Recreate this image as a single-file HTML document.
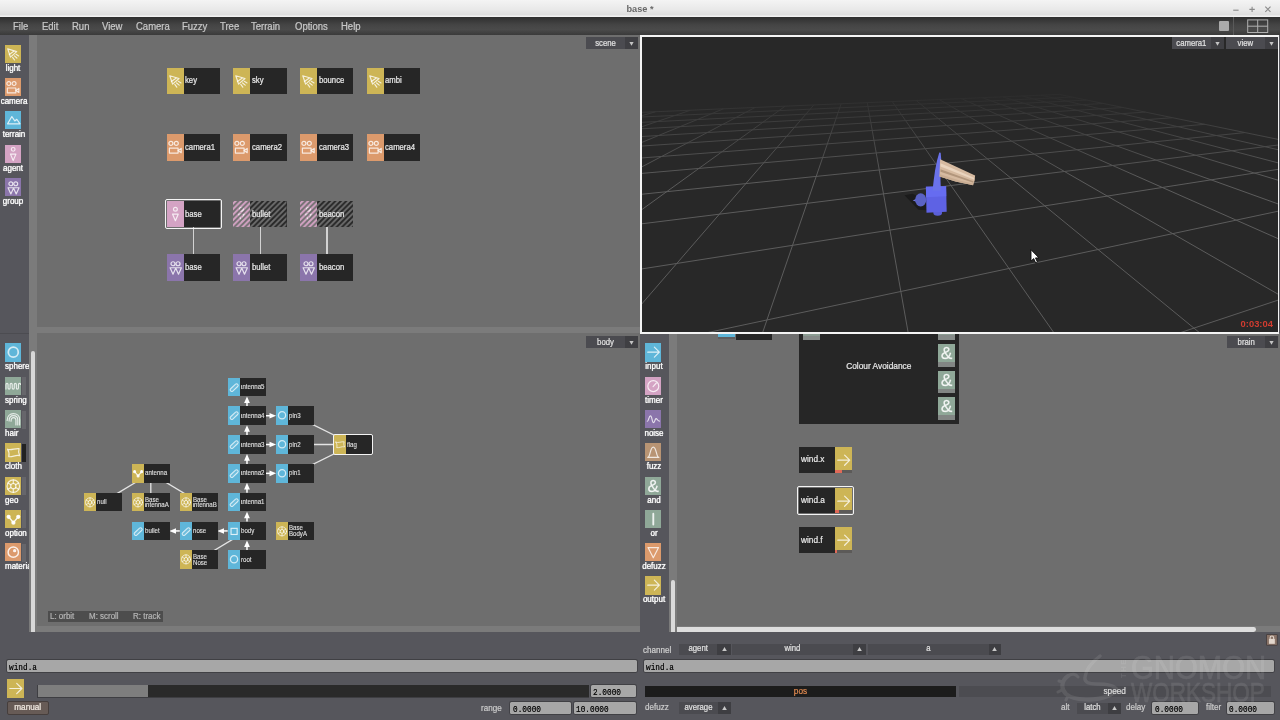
<!DOCTYPE html><html><head><meta charset="utf-8"><title>base *</title>
<style>
html,body{margin:0;padding:0;}
body{width:1280px;height:720px;overflow:hidden;position:relative;background:#56565c;font-family:'Liberation Sans', sans-serif;}
div,svg{box-sizing:border-box}
#root{position:absolute;left:0;top:0;width:1280px;height:720px;overflow:hidden;will-change:transform;-webkit-font-smoothing:antialiased}
</style></head><body><div id="root">
<div style="position:absolute;left:0px;top:0px;width:1280px;height:17px;background:linear-gradient(#f4f4f4,#e8e8e8 60%,#dedede 88%,#f2f2f2 94%);"></div>
<div style="position:absolute;left:540.00px;top:4.61px;width:200px;text-align:center;font-size:9.2px;line-height:9.2px;color:#686868;white-space:nowrap;transform:scaleX(1.0);transform-origin:50% 0;font-weight:bold">base *</div>
<svg style="position:absolute;left:1228px;top:3px" width="48" height="13" viewBox="0 0 48 13"><g stroke="#8a8a8a" stroke-width="1.1" fill="none"><path d="M5.2 7.2 H10.6"/><path d="M21.4 6.4 H26.8 M24.1 3.7 V9.1"/><path d="M37.3 3.7 L42.5 8.9 M42.5 3.7 L37.3 8.9"/></g></svg>
<div style="position:absolute;left:0px;top:17px;width:1280px;height:18px;background:linear-gradient(#2f2f2f,#454545 45%,#4a4a4a 70%,#3a3a3a);"></div>
<div style="position:absolute;left:13.20px;top:21.54px;font-size:10px;line-height:10px;color:#c8c8c8;white-space:nowrap;transform:scaleX(0.95);transform-origin:0 0;-webkit-text-stroke:0.22px #c8c8c8;">File</div>
<div style="position:absolute;left:42.00px;top:21.54px;font-size:10px;line-height:10px;color:#c8c8c8;white-space:nowrap;transform:scaleX(0.95);transform-origin:0 0;-webkit-text-stroke:0.22px #c8c8c8;">Edit</div>
<div style="position:absolute;left:72.00px;top:21.54px;font-size:10px;line-height:10px;color:#c8c8c8;white-space:nowrap;transform:scaleX(0.95);transform-origin:0 0;-webkit-text-stroke:0.22px #c8c8c8;">Run</div>
<div style="position:absolute;left:102.00px;top:21.54px;font-size:10px;line-height:10px;color:#c8c8c8;white-space:nowrap;transform:scaleX(0.95);transform-origin:0 0;-webkit-text-stroke:0.22px #c8c8c8;">View</div>
<div style="position:absolute;left:136.00px;top:21.54px;font-size:10px;line-height:10px;color:#c8c8c8;white-space:nowrap;transform:scaleX(0.95);transform-origin:0 0;-webkit-text-stroke:0.22px #c8c8c8;">Camera</div>
<div style="position:absolute;left:182.00px;top:21.54px;font-size:10px;line-height:10px;color:#c8c8c8;white-space:nowrap;transform:scaleX(0.95);transform-origin:0 0;-webkit-text-stroke:0.22px #c8c8c8;">Fuzzy</div>
<div style="position:absolute;left:220.00px;top:21.54px;font-size:10px;line-height:10px;color:#c8c8c8;white-space:nowrap;transform:scaleX(0.95);transform-origin:0 0;-webkit-text-stroke:0.22px #c8c8c8;">Tree</div>
<div style="position:absolute;left:251.00px;top:21.54px;font-size:10px;line-height:10px;color:#c8c8c8;white-space:nowrap;transform:scaleX(0.95);transform-origin:0 0;-webkit-text-stroke:0.22px #c8c8c8;">Terrain</div>
<div style="position:absolute;left:294.50px;top:21.54px;font-size:10px;line-height:10px;color:#c8c8c8;white-space:nowrap;transform:scaleX(0.95);transform-origin:0 0;-webkit-text-stroke:0.22px #c8c8c8;">Options</div>
<div style="position:absolute;left:341.00px;top:21.54px;font-size:10px;line-height:10px;color:#c8c8c8;white-space:nowrap;transform:scaleX(0.95);transform-origin:0 0;-webkit-text-stroke:0.22px #c8c8c8;">Help</div>
<div style="position:absolute;left:1219px;top:21px;width:10px;height:10px;background:#aaaaaa;border-radius:1px"></div>
<div style="position:absolute;left:1233px;top:17px;width:1px;height:18px;background:#5a5a5a;"></div>
<svg style="position:absolute;left:1247px;top:19px" width="22" height="15" viewBox="0 0 22 15"><g stroke="#b0b0b0" stroke-width="1" fill="none"><rect x="0.7" y="0.9" width="20" height="12.6"/><path d="M10.7 0.9 V13.5 M0.7 7.2 H20.7"/></g></svg>
<div style="position:absolute;left:0px;top:35px;width:29.4px;height:298px;background:#56565c;"></div>
<div style="position:absolute;left:29.4px;top:35px;width:7.4px;height:298px;background:#7b7b7b;"></div>
<div style="position:absolute;left:36.8px;top:35px;width:603.2px;height:298px;background:#6e6e6e;"></div>
<div style="position:absolute;left:36.8px;top:327.3px;width:603.2px;height:5.7px;background:#7b7b7b;"></div>
<div style="position:absolute;left:0px;top:332.8px;width:29.4px;height:0.9px;background:#4c4c51;"></div>
<svg style="position:absolute;left:4.7px;top:44.6px;background:#cdb556;" width="16.6" height="18.3" viewBox="0 0 16.6 18.3"><g transform="translate(0.00 0.36) scale(0.976)"><g stroke="#fff" stroke-opacity=".78" fill="none" stroke-width="1.2" stroke-linecap="round" stroke-linejoin="round" stroke-width="1.15"><path d="M2.8 3.6 L12 6.4 L5.6 12 Z"/><path d="M4.4 9.4 L9 6"/><path d="M11.3 9.2 L14 10.8 M9.6 10.8 L12.2 13 M7.8 12.3 L9.8 15"/></g></g></svg><div style="position:absolute;left:-17.10px;top:63.62px;width:60px;text-align:center;font-size:8.6px;line-height:8.6px;color:#fff;white-space:nowrap;transform:scaleX(0.93);transform-origin:50% 0;-webkit-text-stroke:0.22px #fff;text-shadow:0 0 1px rgba(255,255,255,.55)">light</div>
<svg style="position:absolute;left:4.7px;top:77.9px;background:#dc9a6c;" width="16.6" height="18.3" viewBox="0 0 16.6 18.3"><g transform="translate(0.00 0.36) scale(0.976)"><g stroke="#fff" stroke-opacity=".78" fill="none" stroke-width="1.2" stroke-linecap="round" stroke-linejoin="round" stroke-width="1.25"><circle cx="3.9" cy="5.3" r="2"/><circle cx="9.3" cy="5.3" r="2"/><rect x="2.4" y="9.9" width="8.7" height="5"/><path d="M11.1 12.4 L14.2 10.3 V14.5 Z"/></g></g></svg><div style="position:absolute;left:-15.60px;top:96.92px;width:60px;text-align:center;font-size:8.6px;line-height:8.6px;color:#fff;white-space:nowrap;transform:scaleX(0.93);transform-origin:50% 0;-webkit-text-stroke:0.22px #fff;text-shadow:0 0 1px rgba(255,255,255,.55)">camera</div>
<svg style="position:absolute;left:4.7px;top:111.19999999999999px;background:#5fb6d9;" width="16.6" height="18.3" viewBox="0 0 16.6 18.3"><g transform="translate(0.00 0.36) scale(0.976)"><g stroke="#fff" stroke-opacity=".78" fill="none" stroke-width="1.2" stroke-linecap="round" stroke-linejoin="round" stroke-width="1.35"><path d="M2.6 12.8 L7 5.3 L10 9.8 L12.1 8.1 L15.4 12.8 Z"/></g></g></svg><div style="position:absolute;left:-15.80px;top:130.22px;width:60px;text-align:center;font-size:8.6px;line-height:8.6px;color:#fff;white-space:nowrap;transform:scaleX(0.93);transform-origin:50% 0;-webkit-text-stroke:0.22px #fff;text-shadow:0 0 1px rgba(255,255,255,.55)">terrain</div>
<svg style="position:absolute;left:4.7px;top:144.5px;background:#d4a3c4;" width="16.6" height="18.3" viewBox="0 0 16.6 18.3"><g transform="translate(0.00 0.36) scale(0.976)"><g stroke="#fff" stroke-opacity=".78" fill="none" stroke-width="1.2" stroke-linecap="round" stroke-linejoin="round" stroke-width="1.2"><circle cx="8.4" cy="4.1" r="1.9"/><path d="M5.6 9 H11.2 L8.4 15.6 Z"/></g></g></svg><div style="position:absolute;left:-17.10px;top:163.52px;width:60px;text-align:center;font-size:8.6px;line-height:8.6px;color:#fff;white-space:nowrap;transform:scaleX(0.93);transform-origin:50% 0;-webkit-text-stroke:0.22px #fff;text-shadow:0 0 1px rgba(255,255,255,.55)">agent</div>
<svg style="position:absolute;left:4.7px;top:177.79999999999998px;background:#8b75ab;" width="16.6" height="18.3" viewBox="0 0 16.6 18.3"><g transform="translate(0.00 0.36) scale(0.976)"><g stroke="#fff" stroke-opacity=".78" fill="none" stroke-width="1.2" stroke-linecap="round" stroke-linejoin="round" stroke-width="1.2"><circle cx="6" cy="5.6" r="2"/><circle cx="11" cy="5.6" r="2"/><path d="M3.1 9.6 H8.9 L6 16 Z M8.6 9.6 H14.4 L11.5 16 Z"/></g></g></svg><div style="position:absolute;left:-16.90px;top:196.82px;width:60px;text-align:center;font-size:8.6px;line-height:8.6px;color:#fff;white-space:nowrap;transform:scaleX(0.93);transform-origin:50% 0;-webkit-text-stroke:0.22px #fff;text-shadow:0 0 1px rgba(255,255,255,.55)">group</div>
<div style="position:absolute;left:586.3px;top:37.2px;width:52px;height:11.8px;background:#4b4b50;"></div><div style="position:absolute;left:625.3px;top:37.2px;width:13px;height:11.8px;background:#3f3f43;"></div><div style="position:absolute;left:586.30px;top:38.52px;width:39px;text-align:center;font-size:8.6px;line-height:8.6px;color:#e0e0e0;white-space:nowrap;transform:scaleX(0.9);transform-origin:50% 0;-webkit-text-stroke:0.22px #e0e0e0;">scene</div><svg style="position:absolute;left:628.3px;top:40.6px" width="7" height="6" viewBox="0 0 7 6"><path d="M1.4 1.1 H5.6 L3.5 4.7 Z" fill="#c4c4c4"/></svg>
<div style="position:absolute;left:166.5px;top:67.6px;width:53.5px;height:26.3px;background:#262626;"></div><svg style="position:absolute;left:166.5px;top:67.6px;background:#cdb556;" width="17.0" height="26.3" viewBox="0 0 17.0 26.3"><g transform="translate(0.00 4.15) scale(1.000)"><g stroke="#fff" stroke-opacity=".78" fill="none" stroke-width="1.2" stroke-linecap="round" stroke-linejoin="round" stroke-width="1.15"><path d="M2.8 3.6 L12 6.4 L5.6 12 Z"/><path d="M4.4 9.4 L9 6"/><path d="M11.3 9.2 L14 10.8 M9.6 10.8 L12.2 13 M7.8 12.3 L9.8 15"/></g></g></svg><div style="position:absolute;left:185.40px;top:67.6px;width:34.60px;height:26.30px;overflow:hidden"><div style="position:absolute;left:0.00px;top:8.79px;font-size:8.4px;line-height:8.4px;color:#e8e8e8;white-space:nowrap;transform:scaleX(0.92);transform-origin:0 0;-webkit-text-stroke:0.22px #e8e8e8;">key</div></div>
<div style="position:absolute;left:233.2px;top:67.6px;width:53.5px;height:26.3px;background:#262626;"></div><svg style="position:absolute;left:233.2px;top:67.6px;background:#cdb556;" width="17.0" height="26.3" viewBox="0 0 17.0 26.3"><g transform="translate(0.00 4.15) scale(1.000)"><g stroke="#fff" stroke-opacity=".78" fill="none" stroke-width="1.2" stroke-linecap="round" stroke-linejoin="round" stroke-width="1.15"><path d="M2.8 3.6 L12 6.4 L5.6 12 Z"/><path d="M4.4 9.4 L9 6"/><path d="M11.3 9.2 L14 10.8 M9.6 10.8 L12.2 13 M7.8 12.3 L9.8 15"/></g></g></svg><div style="position:absolute;left:252.10px;top:67.6px;width:34.60px;height:26.30px;overflow:hidden"><div style="position:absolute;left:0.00px;top:8.79px;font-size:8.4px;line-height:8.4px;color:#e8e8e8;white-space:nowrap;transform:scaleX(0.92);transform-origin:0 0;-webkit-text-stroke:0.22px #e8e8e8;">sky</div></div>
<div style="position:absolute;left:299.9px;top:67.6px;width:53.5px;height:26.3px;background:#262626;"></div><svg style="position:absolute;left:299.9px;top:67.6px;background:#cdb556;" width="17.0" height="26.3" viewBox="0 0 17.0 26.3"><g transform="translate(0.00 4.15) scale(1.000)"><g stroke="#fff" stroke-opacity=".78" fill="none" stroke-width="1.2" stroke-linecap="round" stroke-linejoin="round" stroke-width="1.15"><path d="M2.8 3.6 L12 6.4 L5.6 12 Z"/><path d="M4.4 9.4 L9 6"/><path d="M11.3 9.2 L14 10.8 M9.6 10.8 L12.2 13 M7.8 12.3 L9.8 15"/></g></g></svg><div style="position:absolute;left:318.80px;top:67.6px;width:34.60px;height:26.30px;overflow:hidden"><div style="position:absolute;left:0.00px;top:8.79px;font-size:8.4px;line-height:8.4px;color:#e8e8e8;white-space:nowrap;transform:scaleX(0.92);transform-origin:0 0;-webkit-text-stroke:0.22px #e8e8e8;">bounce</div></div>
<div style="position:absolute;left:366.5px;top:67.6px;width:53.5px;height:26.3px;background:#262626;"></div><svg style="position:absolute;left:366.5px;top:67.6px;background:#cdb556;" width="17.0" height="26.3" viewBox="0 0 17.0 26.3"><g transform="translate(0.00 4.15) scale(1.000)"><g stroke="#fff" stroke-opacity=".78" fill="none" stroke-width="1.2" stroke-linecap="round" stroke-linejoin="round" stroke-width="1.15"><path d="M2.8 3.6 L12 6.4 L5.6 12 Z"/><path d="M4.4 9.4 L9 6"/><path d="M11.3 9.2 L14 10.8 M9.6 10.8 L12.2 13 M7.8 12.3 L9.8 15"/></g></g></svg><div style="position:absolute;left:385.40px;top:67.6px;width:34.60px;height:26.30px;overflow:hidden"><div style="position:absolute;left:0.00px;top:8.79px;font-size:8.4px;line-height:8.4px;color:#e8e8e8;white-space:nowrap;transform:scaleX(0.92);transform-origin:0 0;-webkit-text-stroke:0.22px #e8e8e8;">ambi</div></div>
<div style="position:absolute;left:166.5px;top:134.3px;width:53.5px;height:26.3px;background:#262626;"></div><svg style="position:absolute;left:166.5px;top:134.3px;background:#dc9a6c;" width="17.0" height="26.3" viewBox="0 0 17.0 26.3"><g transform="translate(0.00 4.15) scale(1.000)"><g stroke="#fff" stroke-opacity=".78" fill="none" stroke-width="1.2" stroke-linecap="round" stroke-linejoin="round" stroke-width="1.25"><circle cx="3.9" cy="5.3" r="2"/><circle cx="9.3" cy="5.3" r="2"/><rect x="2.4" y="9.9" width="8.7" height="5"/><path d="M11.1 12.4 L14.2 10.3 V14.5 Z"/></g></g></svg><div style="position:absolute;left:185.40px;top:134.3px;width:34.60px;height:26.30px;overflow:hidden"><div style="position:absolute;left:0.00px;top:8.79px;font-size:8.4px;line-height:8.4px;color:#e8e8e8;white-space:nowrap;transform:scaleX(0.92);transform-origin:0 0;-webkit-text-stroke:0.22px #e8e8e8;">camera1</div></div>
<div style="position:absolute;left:233.2px;top:134.3px;width:53.5px;height:26.3px;background:#262626;"></div><svg style="position:absolute;left:233.2px;top:134.3px;background:#dc9a6c;" width="17.0" height="26.3" viewBox="0 0 17.0 26.3"><g transform="translate(0.00 4.15) scale(1.000)"><g stroke="#fff" stroke-opacity=".78" fill="none" stroke-width="1.2" stroke-linecap="round" stroke-linejoin="round" stroke-width="1.25"><circle cx="3.9" cy="5.3" r="2"/><circle cx="9.3" cy="5.3" r="2"/><rect x="2.4" y="9.9" width="8.7" height="5"/><path d="M11.1 12.4 L14.2 10.3 V14.5 Z"/></g></g></svg><div style="position:absolute;left:252.10px;top:134.3px;width:34.60px;height:26.30px;overflow:hidden"><div style="position:absolute;left:0.00px;top:8.79px;font-size:8.4px;line-height:8.4px;color:#e8e8e8;white-space:nowrap;transform:scaleX(0.92);transform-origin:0 0;-webkit-text-stroke:0.22px #e8e8e8;">camera2</div></div>
<div style="position:absolute;left:299.9px;top:134.3px;width:53.5px;height:26.3px;background:#262626;"></div><svg style="position:absolute;left:299.9px;top:134.3px;background:#dc9a6c;" width="17.0" height="26.3" viewBox="0 0 17.0 26.3"><g transform="translate(0.00 4.15) scale(1.000)"><g stroke="#fff" stroke-opacity=".78" fill="none" stroke-width="1.2" stroke-linecap="round" stroke-linejoin="round" stroke-width="1.25"><circle cx="3.9" cy="5.3" r="2"/><circle cx="9.3" cy="5.3" r="2"/><rect x="2.4" y="9.9" width="8.7" height="5"/><path d="M11.1 12.4 L14.2 10.3 V14.5 Z"/></g></g></svg><div style="position:absolute;left:318.80px;top:134.3px;width:34.60px;height:26.30px;overflow:hidden"><div style="position:absolute;left:0.00px;top:8.79px;font-size:8.4px;line-height:8.4px;color:#e8e8e8;white-space:nowrap;transform:scaleX(0.92);transform-origin:0 0;-webkit-text-stroke:0.22px #e8e8e8;">camera3</div></div>
<div style="position:absolute;left:366.5px;top:134.3px;width:53.5px;height:26.3px;background:#262626;"></div><svg style="position:absolute;left:366.5px;top:134.3px;background:#dc9a6c;" width="17.0" height="26.3" viewBox="0 0 17.0 26.3"><g transform="translate(0.00 4.15) scale(1.000)"><g stroke="#fff" stroke-opacity=".78" fill="none" stroke-width="1.2" stroke-linecap="round" stroke-linejoin="round" stroke-width="1.25"><circle cx="3.9" cy="5.3" r="2"/><circle cx="9.3" cy="5.3" r="2"/><rect x="2.4" y="9.9" width="8.7" height="5"/><path d="M11.1 12.4 L14.2 10.3 V14.5 Z"/></g></g></svg><div style="position:absolute;left:385.40px;top:134.3px;width:34.60px;height:26.30px;overflow:hidden"><div style="position:absolute;left:0.00px;top:8.79px;font-size:8.4px;line-height:8.4px;color:#e8e8e8;white-space:nowrap;transform:scaleX(0.92);transform-origin:0 0;-webkit-text-stroke:0.22px #e8e8e8;">camera4</div></div>
<div style="position:absolute;left:192.8px;top:227px;width:1.5px;height:28px;background:#d2d2d2;"></div>
<div style="position:absolute;left:259.5px;top:227px;width:1.5px;height:28px;background:#d2d2d2;"></div>
<div style="position:absolute;left:326.2px;top:227px;width:1.5px;height:28px;background:#d2d2d2;"></div>
<div style="position:absolute;left:166.5px;top:201.0px;width:53.5px;height:26.3px;background:#262626;"></div><svg style="position:absolute;left:166.5px;top:201.0px;background:#d4a3c4;" width="17.0" height="26.3" viewBox="0 0 17.0 26.3"><g transform="translate(0.00 4.15) scale(1.000)"><g stroke="#fff" stroke-opacity=".78" fill="none" stroke-width="1.2" stroke-linecap="round" stroke-linejoin="round" stroke-width="1.2"><circle cx="8.4" cy="4.1" r="1.9"/><path d="M5.6 9 H11.2 L8.4 15.6 Z"/></g></g></svg><div style="position:absolute;left:185.40px;top:201.0px;width:34.60px;height:26.30px;overflow:hidden"><div style="position:absolute;left:0.00px;top:8.79px;font-size:8.4px;line-height:8.4px;color:#e8e8e8;white-space:nowrap;transform:scaleX(0.92);transform-origin:0 0;-webkit-text-stroke:0.22px #e8e8e8;">base</div></div><div style="position:absolute;left:164.8px;top:199.3px;width:56.9px;height:29.7px;background:transparent;border:1.5px solid #f4f4f4;border-radius:2px"></div>
<div style="position:absolute;left:233.2px;top:201.0px;width:53.5px;height:26.3px;background:#262626;"></div><svg style="position:absolute;left:233.2px;top:201.0px;background:#d4a3c4;" width="17.0" height="26.3" viewBox="0 0 17.0 26.3"><g transform="translate(0.00 4.15) scale(1.000)"><g stroke="#fff" stroke-opacity=".78" fill="none" stroke-width="1.2" stroke-linecap="round" stroke-linejoin="round" stroke-width="1.2"><circle cx="8.4" cy="4.1" r="1.9"/><path d="M5.6 9 H11.2 L8.4 15.6 Z"/></g></g></svg><svg style="position:absolute;left:233.2px;top:201.0px" width="53.5" height="26.3" viewBox="0 0 53.5 26.3"><defs><pattern id="h1" width="5.45" height="5.45" patternUnits="userSpaceOnUse"><path d="M-1 1 L1 -1 M0 5.45 L5.45 0 M4.45 6.45 L6.45 4.45" stroke="#6e6e6e" stroke-width="1.85"/></pattern></defs><rect width="53.5" height="26.3" fill="url(#h1)"/></svg><div style="position:absolute;left:252.10px;top:201.0px;width:34.60px;height:26.30px;overflow:hidden"><div style="position:absolute;left:0.00px;top:8.79px;font-size:8.4px;line-height:8.4px;color:#e8e8e8;white-space:nowrap;transform:scaleX(0.92);transform-origin:0 0;-webkit-text-stroke:0.22px #e8e8e8;">bullet</div></div>
<div style="position:absolute;left:299.9px;top:201.0px;width:53.5px;height:26.3px;background:#262626;"></div><svg style="position:absolute;left:299.9px;top:201.0px;background:#d4a3c4;" width="17.0" height="26.3" viewBox="0 0 17.0 26.3"><g transform="translate(0.00 4.15) scale(1.000)"><g stroke="#fff" stroke-opacity=".78" fill="none" stroke-width="1.2" stroke-linecap="round" stroke-linejoin="round" stroke-width="1.2"><circle cx="8.4" cy="4.1" r="1.9"/><path d="M5.6 9 H11.2 L8.4 15.6 Z"/></g></g></svg><svg style="position:absolute;left:299.9px;top:201.0px" width="53.5" height="26.3" viewBox="0 0 53.5 26.3"><defs><pattern id="h2" width="5.45" height="5.45" patternUnits="userSpaceOnUse"><path d="M-1 1 L1 -1 M0 5.45 L5.45 0 M4.45 6.45 L6.45 4.45" stroke="#6e6e6e" stroke-width="1.85"/></pattern></defs><rect width="53.5" height="26.3" fill="url(#h2)"/></svg><div style="position:absolute;left:318.80px;top:201.0px;width:34.60px;height:26.30px;overflow:hidden"><div style="position:absolute;left:0.00px;top:8.79px;font-size:8.4px;line-height:8.4px;color:#e8e8e8;white-space:nowrap;transform:scaleX(0.92);transform-origin:0 0;-webkit-text-stroke:0.22px #e8e8e8;">beacon</div></div>
<div style="position:absolute;left:166.5px;top:254.3px;width:53.5px;height:26.3px;background:#262626;"></div><svg style="position:absolute;left:166.5px;top:254.3px;background:#8b75ab;" width="17.0" height="26.3" viewBox="0 0 17.0 26.3"><g transform="translate(0.00 4.15) scale(1.000)"><g stroke="#fff" stroke-opacity=".78" fill="none" stroke-width="1.2" stroke-linecap="round" stroke-linejoin="round" stroke-width="1.2"><circle cx="6" cy="5.6" r="2"/><circle cx="11" cy="5.6" r="2"/><path d="M3.1 9.6 H8.9 L6 16 Z M8.6 9.6 H14.4 L11.5 16 Z"/></g></g></svg><div style="position:absolute;left:185.40px;top:254.3px;width:34.60px;height:26.30px;overflow:hidden"><div style="position:absolute;left:0.00px;top:8.79px;font-size:8.4px;line-height:8.4px;color:#e8e8e8;white-space:nowrap;transform:scaleX(0.92);transform-origin:0 0;-webkit-text-stroke:0.22px #e8e8e8;">base</div></div>
<div style="position:absolute;left:233.2px;top:254.3px;width:53.5px;height:26.3px;background:#262626;"></div><svg style="position:absolute;left:233.2px;top:254.3px;background:#8b75ab;" width="17.0" height="26.3" viewBox="0 0 17.0 26.3"><g transform="translate(0.00 4.15) scale(1.000)"><g stroke="#fff" stroke-opacity=".78" fill="none" stroke-width="1.2" stroke-linecap="round" stroke-linejoin="round" stroke-width="1.2"><circle cx="6" cy="5.6" r="2"/><circle cx="11" cy="5.6" r="2"/><path d="M3.1 9.6 H8.9 L6 16 Z M8.6 9.6 H14.4 L11.5 16 Z"/></g></g></svg><div style="position:absolute;left:252.10px;top:254.3px;width:34.60px;height:26.30px;overflow:hidden"><div style="position:absolute;left:0.00px;top:8.79px;font-size:8.4px;line-height:8.4px;color:#e8e8e8;white-space:nowrap;transform:scaleX(0.92);transform-origin:0 0;-webkit-text-stroke:0.22px #e8e8e8;">bullet</div></div>
<div style="position:absolute;left:299.9px;top:254.3px;width:53.5px;height:26.3px;background:#262626;"></div><svg style="position:absolute;left:299.9px;top:254.3px;background:#8b75ab;" width="17.0" height="26.3" viewBox="0 0 17.0 26.3"><g transform="translate(0.00 4.15) scale(1.000)"><g stroke="#fff" stroke-opacity=".78" fill="none" stroke-width="1.2" stroke-linecap="round" stroke-linejoin="round" stroke-width="1.2"><circle cx="6" cy="5.6" r="2"/><circle cx="11" cy="5.6" r="2"/><path d="M3.1 9.6 H8.9 L6 16 Z M8.6 9.6 H14.4 L11.5 16 Z"/></g></g></svg><div style="position:absolute;left:318.80px;top:254.3px;width:34.60px;height:26.30px;overflow:hidden"><div style="position:absolute;left:0.00px;top:8.79px;font-size:8.4px;line-height:8.4px;color:#e8e8e8;white-space:nowrap;transform:scaleX(0.92);transform-origin:0 0;-webkit-text-stroke:0.22px #e8e8e8;">beacon</div></div>
<div style="position:absolute;left:0px;top:333.5px;width:29.4px;height:298.3px;background:#56565c;"></div>
<div style="position:absolute;left:29.4px;top:333px;width:7.4px;height:298.8px;background:#7b7b7b;"></div>
<div style="position:absolute;left:36.8px;top:333px;width:603.2px;height:298.8px;background:#6e6e6e;"></div>
<div style="position:absolute;left:36.8px;top:625.8px;width:603.2px;height:6px;background:#7b7b7b;"></div>
<div style="position:absolute;left:30.7px;top:351px;width:4.6px;height:281px;background:#d8d8d8;border-radius:2.3px 2.3px 0 0"></div>
<div style="position:absolute;left:0;top:333px;width:29.4px;height:299px;overflow:hidden"><div style="position:absolute;left:0;top:-333px">
<svg style="position:absolute;left:4.7px;top:343.4px;background:#5fb6d9;" width="16.6" height="18.3" viewBox="0 0 16.6 18.3"><g transform="translate(0.00 0.36) scale(0.976)"><circle cx="8.5" cy="9" r="5.1" stroke="#fff" stroke-opacity=".72" fill="none" stroke-width="1.8"/></g></svg><div style="position:absolute;left:4.50px;top:362.42px;font-size:8.6px;line-height:8.6px;color:#fff;white-space:nowrap;transform:scaleX(0.93);transform-origin:0 0;-webkit-text-stroke:0.22px #fff;text-shadow:0 0 1px rgba(255,255,255,.55)">sphere</div>
<svg style="position:absolute;left:4.7px;top:376.7px;background:#8fa898;" width="16.6" height="18.3" viewBox="0 0 16.6 18.3"><g transform="translate(0.00 0.36) scale(0.976)"><g stroke="#fff" stroke-opacity=".78" fill="none" stroke-width="1.2" stroke-linecap="round" stroke-linejoin="round" stroke-width="1.25"><path d="M1.00 12.00 V7.20 Q1.00 6.20 2.06 6.20 Q3.13 6.20 3.13 7.20 V11.00 Q3.13 12.00 4.20 12.00 Q5.26 12.00 5.26 11.00 V7.20 Q5.26 6.20 6.32 6.20 Q7.39 6.20 7.39 7.20 V11.00 Q7.39 12.00 8.46 12.00 Q9.52 12.00 9.52 11.00 V7.20 Q9.52 6.20 10.58 6.20 Q11.65 6.20 11.65 7.20 V11.00 Q11.65 12.00 12.71 12.00 Q13.78 12.00 13.78 11.00 V7.20 Q13.78 6.20 14.84 6.20 Q15.91 6.20 15.91 7.20 V6.80"/></g></g></svg><div style="position:absolute;left:21.9px;top:377.2px;width:4px;height:18px;background:#66666b;"></div><div style="position:absolute;left:4.50px;top:395.72px;font-size:8.6px;line-height:8.6px;color:#fff;white-space:nowrap;transform:scaleX(0.93);transform-origin:0 0;-webkit-text-stroke:0.22px #fff;text-shadow:0 0 1px rgba(255,255,255,.55)">spring</div>
<svg style="position:absolute;left:4.7px;top:410.0px;background:#8fa898;" width="16.6" height="18.3" viewBox="0 0 16.6 18.3"><g transform="translate(0.00 0.36) scale(0.976)"><g stroke="#fff" stroke-opacity=".78" fill="none" stroke-width="1.2" stroke-linecap="round" stroke-linejoin="round" stroke-width="1.1"><path d="M2.2 10.4 C2.2 5.8 5.2 3.4 8.6 3.4 C12.2 3.4 15 5.8 15 9.4 V15"/><path d="M4.2 10.8 C4.2 7.2 6.2 5.4 8.6 5.4 C11.2 5.4 13.1 7 13.1 9.6 V15"/><path d="M6.2 11.2 C6.2 8.6 7.2 7.4 8.8 7.4 C10.4 7.4 11.2 8.4 11.2 9.8 V15"/></g></g></svg><div style="position:absolute;left:21.9px;top:410.5px;width:4px;height:18px;background:#66666b;"></div><div style="position:absolute;left:4.50px;top:429.02px;font-size:8.6px;line-height:8.6px;color:#fff;white-space:nowrap;transform:scaleX(0.93);transform-origin:0 0;-webkit-text-stroke:0.22px #fff;text-shadow:0 0 1px rgba(255,255,255,.55)">hair</div>
<svg style="position:absolute;left:4.7px;top:443.29999999999995px;background:#cdb556;" width="16.6" height="18.3" viewBox="0 0 16.6 18.3"><g transform="translate(0.00 0.36) scale(0.976)"><g stroke="#fff" stroke-opacity=".78" fill="none" stroke-width="1.2" stroke-linecap="round" stroke-linejoin="round" stroke-width="1.2" stroke-opacity=".7"><path d="M2.6 6 C6 7.6 10.5 4.8 14.4 5.4 C13.4 8.2 13.8 10.2 15 12.6 C11 11.4 7.5 14.4 3.8 13.6 C4.6 10.6 4.2 8.4 2.6 6 Z"/></g></g></svg><div style="position:absolute;left:21.9px;top:443.79999999999995px;width:4px;height:18px;background:#222;"></div><div style="position:absolute;left:4.50px;top:462.32px;font-size:8.6px;line-height:8.6px;color:#fff;white-space:nowrap;transform:scaleX(0.93);transform-origin:0 0;-webkit-text-stroke:0.22px #fff;text-shadow:0 0 1px rgba(255,255,255,.55)">cloth</div>
<svg style="position:absolute;left:4.7px;top:476.59999999999997px;background:#cdb556;" width="16.6" height="18.3" viewBox="0 0 16.6 18.3"><g transform="translate(0.00 0.36) scale(0.976)"><g stroke="#fff" stroke-opacity=".78" fill="none" stroke-width="1.2" stroke-linecap="round" stroke-linejoin="round" stroke-width="1.1" stroke-opacity=".55"><circle cx="8.5" cy="9" r="6.4"/><circle cx="8.5" cy="9" r="2.7"/><path d="M8.5 2.6 V6.3 M8.5 11.7 V15.4 M2.96 5.8 L6.16 7.65 M10.84 10.35 L14.04 12.2 M14.04 5.8 L10.84 7.65 M6.16 10.35 L2.96 12.2"/></g></g></svg><div style="position:absolute;left:21.9px;top:477.09999999999997px;width:4px;height:18px;background:#66666b;"></div><div style="position:absolute;left:4.50px;top:495.62px;font-size:8.6px;line-height:8.6px;color:#fff;white-space:nowrap;transform:scaleX(0.93);transform-origin:0 0;-webkit-text-stroke:0.22px #fff;text-shadow:0 0 1px rgba(255,255,255,.55)">geo</div>
<svg style="position:absolute;left:4.7px;top:509.9px;background:#cdb556;" width="16.6" height="18.3" viewBox="0 0 16.6 18.3"><g transform="translate(0.00 0.36) scale(0.976)"><g stroke="#fff" stroke-opacity=".9" fill="#fff" fill-opacity=".95" stroke-width="1.45" stroke-linecap="round" stroke-linejoin="round"><path d="M3.7 6.6 L8.6 12.6 L13.6 6.6" fill="none"/><circle cx="3.7" cy="6.6" r="1.45"/><circle cx="13.6" cy="6.6" r="1.45"/><circle cx="8.6" cy="12.6" r="1.45"/></g></g></svg><div style="position:absolute;left:21.9px;top:510.4px;width:4px;height:18px;background:#66666b;"></div><div style="position:absolute;left:4.50px;top:528.92px;font-size:8.6px;line-height:8.6px;color:#fff;white-space:nowrap;transform:scaleX(0.93);transform-origin:0 0;-webkit-text-stroke:0.22px #fff;text-shadow:0 0 1px rgba(255,255,255,.55)">option</div>
<svg style="position:absolute;left:4.7px;top:543.1999999999999px;background:#dc9a6c;" width="16.6" height="18.3" viewBox="0 0 16.6 18.3"><g transform="translate(0.00 0.36) scale(0.976)"><circle cx="8.5" cy="9" r="5.3" stroke="#fff" stroke-opacity=".85" fill="none" stroke-width="1.5"/><circle cx="9.9" cy="7.5" r="1.7" fill="#fff" fill-opacity=".9"/></g></svg><div style="position:absolute;left:21.9px;top:543.6999999999999px;width:4px;height:18px;background:#66666b;"></div><div style="position:absolute;left:4.50px;top:562.22px;font-size:8.6px;line-height:8.6px;color:#fff;white-space:nowrap;transform:scaleX(0.93);transform-origin:0 0;-webkit-text-stroke:0.22px #fff;text-shadow:0 0 1px rgba(255,255,255,.55)">material</div>
</div></div>
<div style="position:absolute;left:586.3px;top:336.2px;width:52px;height:11.8px;background:#4b4b50;"></div><div style="position:absolute;left:625.3px;top:336.2px;width:13px;height:11.8px;background:#3f3f43;"></div><div style="position:absolute;left:586.30px;top:337.52px;width:39px;text-align:center;font-size:8.6px;line-height:8.6px;color:#e0e0e0;white-space:nowrap;transform:scaleX(0.9);transform-origin:50% 0;-webkit-text-stroke:0.22px #e0e0e0;">body</div><svg style="position:absolute;left:628.3px;top:339.59999999999997px" width="7" height="6" viewBox="0 0 7 6"><path d="M1.4 1.1 H5.6 L3.5 4.7 Z" fill="#c4c4c4"/></svg>
<div style="position:absolute;left:48.3px;top:611.3px;width:114.5px;height:10.6px;background:#4d4d4d;"></div>
<div style="position:absolute;left:50.20px;top:612.49px;font-size:8.4px;line-height:8.4px;color:#b4b4b4;white-space:nowrap;transform:scaleX(0.95);transform-origin:0 0;-webkit-text-stroke:0.22px #b4b4b4;">L: orbit</div>
<div style="position:absolute;left:88.80px;top:612.49px;font-size:8.4px;line-height:8.4px;color:#b4b4b4;white-space:nowrap;transform:scaleX(0.95);transform-origin:0 0;-webkit-text-stroke:0.22px #b4b4b4;">M: scroll</div>
<div style="position:absolute;left:133.30px;top:612.49px;font-size:8.4px;line-height:8.4px;color:#b4b4b4;white-space:nowrap;transform:scaleX(0.95);transform-origin:0 0;-webkit-text-stroke:0.22px #b4b4b4;">R: track</div>
<svg style="position:absolute;left:0;top:0" width="640" height="720" viewBox="0 0 640 720"><path d="M246.9925 406.40000000000003 V400.273" stroke="#fff" stroke-width="1.5"/><path d="M244.0925 403.07300000000004 L246.9925 396.473 L249.8925 403.07300000000004 Z" fill="#fff"/><path d="M246.9925 435.20000000000005 V429.07300000000004" stroke="#fff" stroke-width="1.5"/><path d="M244.0925 431.87300000000005 L246.9925 425.273 L249.8925 431.87300000000005 Z" fill="#fff"/><path d="M246.9925 464.0 V457.87300000000005" stroke="#fff" stroke-width="1.5"/><path d="M244.0925 460.67300000000006 L246.9925 454.07300000000004 L249.8925 460.67300000000006 Z" fill="#fff"/><path d="M246.9925 492.8 V486.673" stroke="#fff" stroke-width="1.5"/><path d="M244.0925 489.473 L246.9925 482.873 L249.8925 489.473 Z" fill="#fff"/><path d="M246.9925 521.6 V515.473" stroke="#fff" stroke-width="1.5"/><path d="M244.0925 518.273 L246.9925 511.673 L249.8925 518.273 Z" fill="#fff"/><path d="M246.9925 550.4000000000001 V544.273" stroke="#fff" stroke-width="1.5"/><path d="M244.0925 547.073 L246.9925 540.4730000000001 L249.8925 547.073 Z" fill="#fff"/><path d="M265.685 415.73650000000004 H271.7" stroke="#fff" stroke-width="1.5"/><path d="M269.5 412.9365 L276.09999999999997 415.73650000000004 L269.5 418.53650000000005 Z" fill="#fff"/><path d="M265.685 444.53650000000005 H271.7" stroke="#fff" stroke-width="1.5"/><path d="M269.5 441.73650000000004 L276.09999999999997 444.53650000000005 L269.5 447.33650000000006 Z" fill="#fff"/><path d="M265.685 473.3365 H271.7" stroke="#fff" stroke-width="1.5"/><path d="M269.5 470.5365 L276.09999999999997 473.3365 L269.5 476.1365 Z" fill="#fff"/><path d="M227.7 530.9365 H221.78500000000003" stroke="#fff" stroke-width="1.5"/><path d="M223.985 528.1365000000001 L217.38500000000002 530.9365 L223.985 533.7365 Z" fill="#fff"/><path d="M179.8 530.9365 H173.78500000000003" stroke="#fff" stroke-width="1.5"/><path d="M175.985 528.1365000000001 L169.38500000000002 530.9365 L175.985 533.7365 Z" fill="#fff"/><path d="M294.7 415.7 L353.0 444.5" stroke="#e4e4e4" stroke-width="1.3" fill="none"/><path d="M294.7 444.5 L353.0 444.5" stroke="#e4e4e4" stroke-width="1.3" fill="none"/><path d="M294.7 473.3 L353.0 444.5" stroke="#e4e4e4" stroke-width="1.3" fill="none"/><path d="M150.8 473.3 L102.8 502.1" stroke="#e4e4e4" stroke-width="1.3" fill="none"/><path d="M150.8 473.3 L150.8 502.1" stroke="#e4e4e4" stroke-width="1.3" fill="none"/><path d="M150.8 473.3 L198.8 502.1" stroke="#e4e4e4" stroke-width="1.3" fill="none"/><path d="M246.7 530.9 L198.8 559.7" stroke="#e4e4e4" stroke-width="1.3" fill="none"/></svg>
<div style="position:absolute;left:227.7px;top:377.6px;width:37.985px;height:18.673px;background:#262626;"></div><svg style="position:absolute;left:227.7px;top:377.6px;background:#5fb6d9;" width="12.07" height="18.673" viewBox="0 0 12.07 18.673"><g transform="translate(0.00 2.95) scale(0.710)"><rect x="-6.9" y="-2.2" width="13.8" height="4.4" rx="2.2" transform="translate(8.7 9.4) rotate(-43)" stroke="#fff" stroke-opacity=".72" fill="#fff" fill-opacity=".1" stroke-width="1.5"/></g></svg><div style="position:absolute;left:241.07px;top:377.6px;width:24.61px;height:18.67px;overflow:hidden"><div style="position:absolute;left:-2.30px;top:6.47px;font-size:6.3px;line-height:6.3px;color:#e0e0e0;white-space:nowrap;transform:scaleX(0.97);transform-origin:0 0;-webkit-text-stroke:0.1px #e0e0e0;">antenna5</div></div>
<div style="position:absolute;left:227.7px;top:406.40000000000003px;width:37.985px;height:18.673px;background:#262626;"></div><svg style="position:absolute;left:227.7px;top:406.40000000000003px;background:#5fb6d9;" width="12.07" height="18.673" viewBox="0 0 12.07 18.673"><g transform="translate(0.00 2.95) scale(0.710)"><rect x="-6.9" y="-2.2" width="13.8" height="4.4" rx="2.2" transform="translate(8.7 9.4) rotate(-43)" stroke="#fff" stroke-opacity=".72" fill="#fff" fill-opacity=".1" stroke-width="1.5"/></g></svg><div style="position:absolute;left:241.07px;top:406.40000000000003px;width:24.61px;height:18.67px;overflow:hidden"><div style="position:absolute;left:-2.30px;top:6.47px;font-size:6.3px;line-height:6.3px;color:#e0e0e0;white-space:nowrap;transform:scaleX(0.97);transform-origin:0 0;-webkit-text-stroke:0.1px #e0e0e0;">antenna4</div></div>
<div style="position:absolute;left:227.7px;top:435.20000000000005px;width:37.985px;height:18.673px;background:#262626;"></div><svg style="position:absolute;left:227.7px;top:435.20000000000005px;background:#5fb6d9;" width="12.07" height="18.673" viewBox="0 0 12.07 18.673"><g transform="translate(0.00 2.95) scale(0.710)"><rect x="-6.9" y="-2.2" width="13.8" height="4.4" rx="2.2" transform="translate(8.7 9.4) rotate(-43)" stroke="#fff" stroke-opacity=".72" fill="#fff" fill-opacity=".1" stroke-width="1.5"/></g></svg><div style="position:absolute;left:241.07px;top:435.20000000000005px;width:24.61px;height:18.67px;overflow:hidden"><div style="position:absolute;left:-2.30px;top:6.47px;font-size:6.3px;line-height:6.3px;color:#e0e0e0;white-space:nowrap;transform:scaleX(0.97);transform-origin:0 0;-webkit-text-stroke:0.1px #e0e0e0;">antenna3</div></div>
<div style="position:absolute;left:227.7px;top:464.0px;width:37.985px;height:18.673px;background:#262626;"></div><svg style="position:absolute;left:227.7px;top:464.0px;background:#5fb6d9;" width="12.07" height="18.673" viewBox="0 0 12.07 18.673"><g transform="translate(0.00 2.95) scale(0.710)"><rect x="-6.9" y="-2.2" width="13.8" height="4.4" rx="2.2" transform="translate(8.7 9.4) rotate(-43)" stroke="#fff" stroke-opacity=".72" fill="#fff" fill-opacity=".1" stroke-width="1.5"/></g></svg><div style="position:absolute;left:241.07px;top:464.0px;width:24.61px;height:18.67px;overflow:hidden"><div style="position:absolute;left:-2.30px;top:6.47px;font-size:6.3px;line-height:6.3px;color:#e0e0e0;white-space:nowrap;transform:scaleX(0.97);transform-origin:0 0;-webkit-text-stroke:0.1px #e0e0e0;">antenna2</div></div>
<div style="position:absolute;left:227.7px;top:492.8px;width:37.985px;height:18.673px;background:#262626;"></div><svg style="position:absolute;left:227.7px;top:492.8px;background:#5fb6d9;" width="12.07" height="18.673" viewBox="0 0 12.07 18.673"><g transform="translate(0.00 2.95) scale(0.710)"><rect x="-6.9" y="-2.2" width="13.8" height="4.4" rx="2.2" transform="translate(8.7 9.4) rotate(-43)" stroke="#fff" stroke-opacity=".72" fill="#fff" fill-opacity=".1" stroke-width="1.5"/></g></svg><div style="position:absolute;left:241.07px;top:492.8px;width:24.61px;height:18.67px;overflow:hidden"><div style="position:absolute;left:-2.30px;top:6.47px;font-size:6.3px;line-height:6.3px;color:#e0e0e0;white-space:nowrap;transform:scaleX(0.97);transform-origin:0 0;-webkit-text-stroke:0.1px #e0e0e0;">antenna1</div></div>
<div style="position:absolute;left:275.7px;top:406.40000000000003px;width:37.985px;height:18.673px;background:#262626;"></div><svg style="position:absolute;left:275.7px;top:406.40000000000003px;background:#5fb6d9;" width="12.07" height="18.673" viewBox="0 0 12.07 18.673"><g transform="translate(0.00 2.95) scale(0.710)"><circle cx="8.5" cy="9" r="5.1" stroke="#fff" stroke-opacity=".72" fill="none" stroke-width="1.8"/></g></svg><div style="position:absolute;left:289.07px;top:406.40000000000003px;width:24.61px;height:18.67px;overflow:hidden"><div style="position:absolute;left:0.00px;top:6.47px;font-size:6.3px;line-height:6.3px;color:#e0e0e0;white-space:nowrap;transform:scaleX(0.97);transform-origin:0 0;-webkit-text-stroke:0.1px #e0e0e0;">pin3</div></div>
<div style="position:absolute;left:275.7px;top:435.20000000000005px;width:37.985px;height:18.673px;background:#262626;"></div><svg style="position:absolute;left:275.7px;top:435.20000000000005px;background:#5fb6d9;" width="12.07" height="18.673" viewBox="0 0 12.07 18.673"><g transform="translate(0.00 2.95) scale(0.710)"><circle cx="8.5" cy="9" r="5.1" stroke="#fff" stroke-opacity=".72" fill="none" stroke-width="1.8"/></g></svg><div style="position:absolute;left:289.07px;top:435.20000000000005px;width:24.61px;height:18.67px;overflow:hidden"><div style="position:absolute;left:0.00px;top:6.47px;font-size:6.3px;line-height:6.3px;color:#e0e0e0;white-space:nowrap;transform:scaleX(0.97);transform-origin:0 0;-webkit-text-stroke:0.1px #e0e0e0;">pin2</div></div>
<div style="position:absolute;left:275.7px;top:464.0px;width:37.985px;height:18.673px;background:#262626;"></div><svg style="position:absolute;left:275.7px;top:464.0px;background:#5fb6d9;" width="12.07" height="18.673" viewBox="0 0 12.07 18.673"><g transform="translate(0.00 2.95) scale(0.710)"><circle cx="8.5" cy="9" r="5.1" stroke="#fff" stroke-opacity=".72" fill="none" stroke-width="1.8"/></g></svg><div style="position:absolute;left:289.07px;top:464.0px;width:24.61px;height:18.67px;overflow:hidden"><div style="position:absolute;left:0.00px;top:6.47px;font-size:6.3px;line-height:6.3px;color:#e0e0e0;white-space:nowrap;transform:scaleX(0.97);transform-origin:0 0;-webkit-text-stroke:0.1px #e0e0e0;">pin1</div></div>
<div style="position:absolute;left:334.0px;top:435.2px;width:37.985px;height:18.673px;background:#262626;"></div><svg style="position:absolute;left:334.0px;top:435.2px;background:#cdb556;" width="12.07" height="18.673" viewBox="0 0 12.07 18.673"><g transform="translate(0.00 2.95) scale(0.710)"><g stroke="#fff" stroke-opacity=".78" fill="none" stroke-width="1.2" stroke-linecap="round" stroke-linejoin="round" stroke-width="1.2" stroke-opacity=".7"><path d="M2.6 6 C6 7.6 10.5 4.8 14.4 5.4 C13.4 8.2 13.8 10.2 15 12.6 C11 11.4 7.5 14.4 3.8 13.6 C4.6 10.6 4.2 8.4 2.6 6 Z"/></g></g></svg><div style="position:absolute;left:347.37px;top:435.2px;width:24.61px;height:18.67px;overflow:hidden"><div style="position:absolute;left:0.00px;top:6.47px;font-size:6.3px;line-height:6.3px;color:#e0e0e0;white-space:nowrap;transform:scaleX(0.97);transform-origin:0 0;-webkit-text-stroke:0.1px #e0e0e0;">flag</div></div><div style="position:absolute;left:332.6px;top:433.8px;width:40.785px;height:21.473px;background:transparent;border:1.3px solid #f4f4f4;border-radius:2px"></div>
<div style="position:absolute;left:131.8px;top:464.0px;width:37.985px;height:18.673px;background:#262626;"></div><svg style="position:absolute;left:131.8px;top:464.0px;background:#cdb556;" width="12.07" height="18.673" viewBox="0 0 12.07 18.673"><g transform="translate(0.00 2.95) scale(0.710)"><g stroke="#fff" stroke-opacity=".9" fill="#fff" fill-opacity=".95" stroke-width="1.45" stroke-linecap="round" stroke-linejoin="round"><path d="M3.7 6.6 L8.6 12.6 L13.6 6.6" fill="none"/><circle cx="3.7" cy="6.6" r="1.45"/><circle cx="13.6" cy="6.6" r="1.45"/><circle cx="8.6" cy="12.6" r="1.45"/></g></g></svg><div style="position:absolute;left:145.17px;top:464.0px;width:24.61px;height:18.67px;overflow:hidden"><div style="position:absolute;left:0.00px;top:6.47px;font-size:6.3px;line-height:6.3px;color:#e0e0e0;white-space:nowrap;transform:scaleX(0.97);transform-origin:0 0;-webkit-text-stroke:0.1px #e0e0e0;">antenna</div></div>
<div style="position:absolute;left:83.8px;top:492.8px;width:37.985px;height:18.673px;background:#262626;"></div><svg style="position:absolute;left:83.8px;top:492.8px;background:#cdb556;" width="12.07" height="18.673" viewBox="0 0 12.07 18.673"><g transform="translate(0.00 2.95) scale(0.710)"><g stroke="#fff" stroke-opacity=".78" fill="none" stroke-width="1.2" stroke-linecap="round" stroke-linejoin="round" stroke-width="1.1" stroke-opacity=".55"><circle cx="8.5" cy="9" r="6.4"/><circle cx="8.5" cy="9" r="2.7"/><path d="M8.5 2.6 V6.3 M8.5 11.7 V15.4 M2.96 5.8 L6.16 7.65 M10.84 10.35 L14.04 12.2 M14.04 5.8 L10.84 7.65 M6.16 10.35 L2.96 12.2"/></g></g></svg><div style="position:absolute;left:97.17px;top:492.8px;width:24.61px;height:18.67px;overflow:hidden"><div style="position:absolute;left:0.00px;top:6.47px;font-size:6.3px;line-height:6.3px;color:#e0e0e0;white-space:nowrap;transform:scaleX(0.97);transform-origin:0 0;-webkit-text-stroke:0.1px #e0e0e0;">null</div></div>
<div style="position:absolute;left:131.8px;top:492.8px;width:37.985px;height:18.673px;background:#262626;"></div><svg style="position:absolute;left:131.8px;top:492.8px;background:#cdb556;" width="12.07" height="18.673" viewBox="0 0 12.07 18.673"><g transform="translate(0.00 2.95) scale(0.710)"><g stroke="#fff" stroke-opacity=".78" fill="none" stroke-width="1.2" stroke-linecap="round" stroke-linejoin="round" stroke-width="1.1" stroke-opacity=".55"><circle cx="8.5" cy="9" r="6.4"/><circle cx="8.5" cy="9" r="2.7"/><path d="M8.5 2.6 V6.3 M8.5 11.7 V15.4 M2.96 5.8 L6.16 7.65 M10.84 10.35 L14.04 12.2 M14.04 5.8 L10.84 7.65 M6.16 10.35 L2.96 12.2"/></g></g></svg><div style="position:absolute;left:145.17px;top:492.8px;width:24.61px;height:18.67px;overflow:hidden"><div style="position:absolute;left:0.00px;top:3.87px;font-size:6.3px;line-height:6.3px;color:#e0e0e0;white-space:nowrap;transform:scaleX(0.97);transform-origin:0 0;-webkit-text-stroke:0.1px #e0e0e0;">Base</div><div style="position:absolute;left:0.00px;top:9.57px;font-size:6.3px;line-height:6.3px;color:#e0e0e0;white-space:nowrap;transform:scaleX(0.97);transform-origin:0 0;-webkit-text-stroke:0.1px #e0e0e0;"><span style="margin-left:-2.4px">antennaA</span></div></div>
<div style="position:absolute;left:179.8px;top:492.8px;width:37.985px;height:18.673px;background:#262626;"></div><svg style="position:absolute;left:179.8px;top:492.8px;background:#cdb556;" width="12.07" height="18.673" viewBox="0 0 12.07 18.673"><g transform="translate(0.00 2.95) scale(0.710)"><g stroke="#fff" stroke-opacity=".78" fill="none" stroke-width="1.2" stroke-linecap="round" stroke-linejoin="round" stroke-width="1.1" stroke-opacity=".55"><circle cx="8.5" cy="9" r="6.4"/><circle cx="8.5" cy="9" r="2.7"/><path d="M8.5 2.6 V6.3 M8.5 11.7 V15.4 M2.96 5.8 L6.16 7.65 M10.84 10.35 L14.04 12.2 M14.04 5.8 L10.84 7.65 M6.16 10.35 L2.96 12.2"/></g></g></svg><div style="position:absolute;left:193.17px;top:492.8px;width:24.61px;height:18.67px;overflow:hidden"><div style="position:absolute;left:0.00px;top:3.87px;font-size:6.3px;line-height:6.3px;color:#e0e0e0;white-space:nowrap;transform:scaleX(0.97);transform-origin:0 0;-webkit-text-stroke:0.1px #e0e0e0;">Base</div><div style="position:absolute;left:0.00px;top:9.57px;font-size:6.3px;line-height:6.3px;color:#e0e0e0;white-space:nowrap;transform:scaleX(0.97);transform-origin:0 0;-webkit-text-stroke:0.1px #e0e0e0;"><span style="margin-left:-2.4px">antennaB</span></div></div>
<div style="position:absolute;left:131.8px;top:521.6px;width:37.985px;height:18.673px;background:#262626;"></div><svg style="position:absolute;left:131.8px;top:521.6px;background:#5fb6d9;" width="12.07" height="18.673" viewBox="0 0 12.07 18.673"><g transform="translate(0.00 2.95) scale(0.710)"><rect x="-6.9" y="-2.2" width="13.8" height="4.4" rx="2.2" transform="translate(8.7 9.4) rotate(-43)" stroke="#fff" stroke-opacity=".72" fill="#fff" fill-opacity=".1" stroke-width="1.5"/></g></svg><div style="position:absolute;left:145.17px;top:521.6px;width:24.61px;height:18.67px;overflow:hidden"><div style="position:absolute;left:0.00px;top:6.47px;font-size:6.3px;line-height:6.3px;color:#e0e0e0;white-space:nowrap;transform:scaleX(0.97);transform-origin:0 0;-webkit-text-stroke:0.1px #e0e0e0;">bullet</div></div>
<div style="position:absolute;left:179.8px;top:521.6px;width:37.985px;height:18.673px;background:#262626;"></div><svg style="position:absolute;left:179.8px;top:521.6px;background:#5fb6d9;" width="12.07" height="18.673" viewBox="0 0 12.07 18.673"><g transform="translate(0.00 2.95) scale(0.710)"><rect x="-6.9" y="-2.2" width="13.8" height="4.4" rx="2.2" transform="translate(8.7 9.4) rotate(-43)" stroke="#fff" stroke-opacity=".72" fill="#fff" fill-opacity=".1" stroke-width="1.5"/></g></svg><div style="position:absolute;left:193.17px;top:521.6px;width:24.61px;height:18.67px;overflow:hidden"><div style="position:absolute;left:0.00px;top:6.47px;font-size:6.3px;line-height:6.3px;color:#e0e0e0;white-space:nowrap;transform:scaleX(0.97);transform-origin:0 0;-webkit-text-stroke:0.1px #e0e0e0;">nose</div></div>
<div style="position:absolute;left:227.7px;top:521.6px;width:37.985px;height:18.673px;background:#262626;"></div><svg style="position:absolute;left:227.7px;top:521.6px;background:#5fb6d9;" width="12.07" height="18.673" viewBox="0 0 12.07 18.673"><g transform="translate(0.00 2.95) scale(0.710)"><rect x="4.3" y="4.8" width="8.6" height="8.6" stroke="#fff" stroke-opacity=".8" fill="none" stroke-width="1.6"/></g></svg><div style="position:absolute;left:241.07px;top:521.6px;width:24.61px;height:18.67px;overflow:hidden"><div style="position:absolute;left:0.00px;top:6.47px;font-size:6.3px;line-height:6.3px;color:#e0e0e0;white-space:nowrap;transform:scaleX(0.97);transform-origin:0 0;-webkit-text-stroke:0.1px #e0e0e0;">body</div></div>
<div style="position:absolute;left:275.7px;top:521.6px;width:37.985px;height:18.673px;background:#262626;"></div><svg style="position:absolute;left:275.7px;top:521.6px;background:#cdb556;" width="12.07" height="18.673" viewBox="0 0 12.07 18.673"><g transform="translate(0.00 2.95) scale(0.710)"><g stroke="#fff" stroke-opacity=".78" fill="none" stroke-width="1.2" stroke-linecap="round" stroke-linejoin="round" stroke-width="1.1" stroke-opacity=".55"><circle cx="8.5" cy="9" r="6.4"/><circle cx="8.5" cy="9" r="2.7"/><path d="M8.5 2.6 V6.3 M8.5 11.7 V15.4 M2.96 5.8 L6.16 7.65 M10.84 10.35 L14.04 12.2 M14.04 5.8 L10.84 7.65 M6.16 10.35 L2.96 12.2"/></g></g></svg><div style="position:absolute;left:289.07px;top:521.6px;width:24.61px;height:18.67px;overflow:hidden"><div style="position:absolute;left:0.00px;top:3.87px;font-size:6.3px;line-height:6.3px;color:#e0e0e0;white-space:nowrap;transform:scaleX(0.97);transform-origin:0 0;-webkit-text-stroke:0.1px #e0e0e0;">Base</div><div style="position:absolute;left:0.00px;top:9.57px;font-size:6.3px;line-height:6.3px;color:#e0e0e0;white-space:nowrap;transform:scaleX(0.97);transform-origin:0 0;-webkit-text-stroke:0.1px #e0e0e0;">BodyA</div></div>
<div style="position:absolute;left:179.8px;top:550.4000000000001px;width:37.985px;height:18.673px;background:#262626;"></div><svg style="position:absolute;left:179.8px;top:550.4000000000001px;background:#cdb556;" width="12.07" height="18.673" viewBox="0 0 12.07 18.673"><g transform="translate(0.00 2.95) scale(0.710)"><g stroke="#fff" stroke-opacity=".78" fill="none" stroke-width="1.2" stroke-linecap="round" stroke-linejoin="round" stroke-width="1.1" stroke-opacity=".55"><circle cx="8.5" cy="9" r="6.4"/><circle cx="8.5" cy="9" r="2.7"/><path d="M8.5 2.6 V6.3 M8.5 11.7 V15.4 M2.96 5.8 L6.16 7.65 M10.84 10.35 L14.04 12.2 M14.04 5.8 L10.84 7.65 M6.16 10.35 L2.96 12.2"/></g></g></svg><div style="position:absolute;left:193.17px;top:550.4000000000001px;width:24.61px;height:18.67px;overflow:hidden"><div style="position:absolute;left:0.00px;top:3.87px;font-size:6.3px;line-height:6.3px;color:#e0e0e0;white-space:nowrap;transform:scaleX(0.97);transform-origin:0 0;-webkit-text-stroke:0.1px #e0e0e0;">Base</div><div style="position:absolute;left:0.00px;top:9.57px;font-size:6.3px;line-height:6.3px;color:#e0e0e0;white-space:nowrap;transform:scaleX(0.97);transform-origin:0 0;-webkit-text-stroke:0.1px #e0e0e0;">Nose</div></div>
<div style="position:absolute;left:227.7px;top:550.4000000000001px;width:37.985px;height:18.673px;background:#262626;"></div><svg style="position:absolute;left:227.7px;top:550.4000000000001px;background:#5fb6d9;" width="12.07" height="18.673" viewBox="0 0 12.07 18.673"><g transform="translate(0.00 2.95) scale(0.710)"><circle cx="8.5" cy="9" r="5.1" stroke="#fff" stroke-opacity=".72" fill="none" stroke-width="1.8"/></g></svg><div style="position:absolute;left:241.07px;top:550.4000000000001px;width:24.61px;height:18.67px;overflow:hidden"><div style="position:absolute;left:0.00px;top:6.47px;font-size:6.3px;line-height:6.3px;color:#e0e0e0;white-space:nowrap;transform:scaleX(0.97);transform-origin:0 0;-webkit-text-stroke:0.1px #e0e0e0;">root</div></div>
<div style="position:absolute;left:640px;top:333px;width:29.2px;height:299px;background:#56565c;"></div>
<div style="position:absolute;left:669.2px;top:333px;width:7.4px;height:299px;background:#7b7b7b;"></div>
<div style="position:absolute;left:676.6px;top:333px;width:603.4px;height:299px;background:#6e6e6e;"></div>
<div style="position:absolute;left:676.6px;top:625.8px;width:603.4px;height:6px;background:#7b7b7b;"></div>
<div style="position:absolute;left:670.7px;top:580px;width:4.8px;height:52px;background:#dadada;border-radius:2.4px 2.4px 0 0"></div>
<div style="position:absolute;left:677px;top:626.8px;width:579.3px;height:4.8px;background:#dedede;border-radius:0 2.4px 2.4px 0"></div>
<svg style="position:absolute;left:644.7px;top:343.3px;background:#5fb6d9;" width="16.6" height="18.3" viewBox="0 0 16.6 18.3"><g transform="translate(0.00 0.36) scale(0.976)"><g stroke="#fff" stroke-opacity=".78" fill="none" stroke-width="1.2" stroke-linecap="round" stroke-linejoin="round" stroke-width="1.5" stroke-opacity=".85"><path d="M2.8 9 H14.4 M9.6 3.9 L14.7 9 L9.6 14.1"/></g></g></svg><div style="position:absolute;left:623.70px;top:362.32px;width:60px;text-align:center;font-size:8.6px;line-height:8.6px;color:#fff;white-space:nowrap;transform:scaleX(0.93);transform-origin:50% 0;-webkit-text-stroke:0.22px #fff;text-shadow:0 0 1px rgba(255,255,255,.55)">input</div>
<svg style="position:absolute;left:644.7px;top:376.6px;background:#d4a3c4;" width="16.6" height="18.3" viewBox="0 0 16.6 18.3"><g transform="translate(0.00 0.36) scale(0.976)"><g stroke="#fff" stroke-opacity=".78" fill="none" stroke-width="1.2" stroke-linecap="round" stroke-linejoin="round" stroke-width="1.5"><circle cx="8.5" cy="9" r="5.6"/><path d="M8.3 9.4 L11.6 5.8"/></g></g></svg><div style="position:absolute;left:623.70px;top:395.62px;width:60px;text-align:center;font-size:8.6px;line-height:8.6px;color:#fff;white-space:nowrap;transform:scaleX(0.93);transform-origin:50% 0;-webkit-text-stroke:0.22px #fff;text-shadow:0 0 1px rgba(255,255,255,.55)">timer</div>
<svg style="position:absolute;left:644.7px;top:409.9px;background:#8b75ab;" width="16.6" height="18.3" viewBox="0 0 16.6 18.3"><g transform="translate(0.00 0.36) scale(0.976)"><g stroke="#fff" stroke-opacity=".78" fill="none" stroke-width="1.2" stroke-linecap="round" stroke-linejoin="round" stroke-width="1.5"><path d="M2.4 11.2 C3.8 11.2 4 5.6 5.6 5.6 C7.4 5.6 7 12.6 8.8 12.6 C10.2 12.6 10 8.4 11.4 8.4 C12.6 8.4 12.6 11 14.8 11"/></g></g></svg><div style="position:absolute;left:623.70px;top:428.92px;width:60px;text-align:center;font-size:8.6px;line-height:8.6px;color:#fff;white-space:nowrap;transform:scaleX(0.93);transform-origin:50% 0;-webkit-text-stroke:0.22px #fff;text-shadow:0 0 1px rgba(255,255,255,.55)">noise</div>
<svg style="position:absolute;left:644.7px;top:443.2px;background:#b89474;" width="16.6" height="18.3" viewBox="0 0 16.6 18.3"><g transform="translate(0.00 0.36) scale(0.976)"><g stroke="#fff" stroke-opacity=".78" fill="none" stroke-width="1.2" stroke-linecap="round" stroke-linejoin="round" stroke-width="1.5"><path d="M2.8 14.4 C5.6 14.4 5 3.8 8.5 3.8 C12 3.8 11.4 14.4 14.2 14.4 Z"/></g></g></svg><div style="position:absolute;left:623.70px;top:462.22px;width:60px;text-align:center;font-size:8.6px;line-height:8.6px;color:#fff;white-space:nowrap;transform:scaleX(0.93);transform-origin:50% 0;-webkit-text-stroke:0.22px #fff;text-shadow:0 0 1px rgba(255,255,255,.55)">fuzz</div>
<svg style="position:absolute;left:644.7px;top:476.5px;background:#8fa898;" width="16.6" height="18.3" viewBox="0 0 16.6 18.3"><g transform="translate(0.00 0.36) scale(0.976)"><text x="8.5" y="15" text-anchor="middle" font-family="'Liberation Sans', sans-serif" font-size="17.5" fill="#fff" fill-opacity=".88" stroke="#fff" stroke-opacity=".5" stroke-width=".3">&amp;</text></g></svg><div style="position:absolute;left:623.70px;top:495.52px;width:60px;text-align:center;font-size:8.6px;line-height:8.6px;color:#fff;white-space:nowrap;transform:scaleX(0.93);transform-origin:50% 0;-webkit-text-stroke:0.22px #fff;text-shadow:0 0 1px rgba(255,255,255,.55)">and</div>
<svg style="position:absolute;left:644.7px;top:509.8px;background:#8fa898;" width="16.6" height="18.3" viewBox="0 0 16.6 18.3"><g transform="translate(0.00 0.36) scale(0.976)"><path d="M8.5 3.4 V14.6" stroke="#fff" stroke-opacity=".85" stroke-width="1.9" stroke-linecap="round"/></g></svg><div style="position:absolute;left:623.70px;top:528.82px;width:60px;text-align:center;font-size:8.6px;line-height:8.6px;color:#fff;white-space:nowrap;transform:scaleX(0.93);transform-origin:50% 0;-webkit-text-stroke:0.22px #fff;text-shadow:0 0 1px rgba(255,255,255,.55)">or</div>
<svg style="position:absolute;left:644.7px;top:543.1px;background:#dc9a6c;" width="16.6" height="18.3" viewBox="0 0 16.6 18.3"><g transform="translate(0.00 0.36) scale(0.976)"><g stroke="#fff" stroke-opacity=".78" fill="none" stroke-width="1.2" stroke-linecap="round" stroke-linejoin="round" stroke-width="1.5"><path d="M3.1 4.3 H13.9 L8.5 14.8 Z"/></g></g></svg><div style="position:absolute;left:623.70px;top:562.12px;width:60px;text-align:center;font-size:8.6px;line-height:8.6px;color:#fff;white-space:nowrap;transform:scaleX(0.93);transform-origin:50% 0;-webkit-text-stroke:0.22px #fff;text-shadow:0 0 1px rgba(255,255,255,.55)">defuzz</div>
<svg style="position:absolute;left:644.7px;top:576.4px;background:#cdb556;" width="16.6" height="18.3" viewBox="0 0 16.6 18.3"><g transform="translate(0.00 0.36) scale(0.976)"><g stroke="#fff" stroke-opacity=".78" fill="none" stroke-width="1.2" stroke-linecap="round" stroke-linejoin="round" stroke-width="1.5" stroke-opacity=".85"><path d="M2.8 9 H14.4 M9.6 3.9 L14.7 9 L9.6 14.1"/></g></g></svg><div style="position:absolute;left:623.70px;top:595.42px;width:60px;text-align:center;font-size:8.6px;line-height:8.6px;color:#fff;white-space:nowrap;transform:scaleX(0.93);transform-origin:50% 0;-webkit-text-stroke:0.22px #fff;text-shadow:0 0 1px rgba(255,255,255,.55)">output</div>
<div style="position:absolute;left:718.3px;top:333px;width:17.2px;height:6.4px;background:#5e5e60;"></div>
<div style="position:absolute;left:718.3px;top:333px;width:17.2px;height:3.8px;background:#5fb6d9;"></div>
<div style="position:absolute;left:735.5px;top:333px;width:36.4px;height:6.7px;background:#262626;"></div>
<div style="position:absolute;left:799.1px;top:333px;width:159.6px;height:91px;background:#262626;"></div>
<div style="position:absolute;left:803px;top:333px;width:17.1px;height:7px;background:#858a88;"></div>
<div style="position:absolute;left:803px;top:333px;width:17.1px;height:3px;background:#8b9c92;"></div>
<div style="position:absolute;left:938px;top:333px;width:16.9px;height:7px;background:#858a88;"></div>
<div style="position:absolute;left:938px;top:333px;width:16.9px;height:2.4px;background:#8b9c92;"></div>
<div style="position:absolute;left:799.10px;top:362.04px;width:159.6px;text-align:center;font-size:8.7px;line-height:8.7px;color:#e6e6e6;white-space:nowrap;transform:scaleX(0.96);transform-origin:50% 0;-webkit-text-stroke:0.22px #e6e6e6;">Colour Avoidance</div>
<div style="position:absolute;left:938px;top:361.0px;width:16.9px;height:5.7px;background:#828684;"></div>
<svg style="position:absolute;left:938px;top:344.0px;background:#8fa898;" width="16.9" height="18.4" viewBox="0 0 16.9 18.4"><g transform="translate(0.00 0.25) scale(0.994)"><text x="8.5" y="15" text-anchor="middle" font-family="'Liberation Sans', sans-serif" font-size="17.5" fill="#fff" fill-opacity=".88" stroke="#fff" stroke-opacity=".5" stroke-width=".3">&amp;</text></g></svg>
<div style="position:absolute;left:938px;top:387.5px;width:16.9px;height:5.7px;background:#828684;"></div>
<svg style="position:absolute;left:938px;top:370.5px;background:#8fa898;" width="16.9" height="18.4" viewBox="0 0 16.9 18.4"><g transform="translate(0.00 0.25) scale(0.994)"><text x="8.5" y="15" text-anchor="middle" font-family="'Liberation Sans', sans-serif" font-size="17.5" fill="#fff" fill-opacity=".88" stroke="#fff" stroke-opacity=".5" stroke-width=".3">&amp;</text></g></svg>
<div style="position:absolute;left:938px;top:414.0px;width:16.9px;height:5.7px;background:#828684;"></div>
<svg style="position:absolute;left:938px;top:397.0px;background:#8fa898;" width="16.9" height="18.4" viewBox="0 0 16.9 18.4"><g transform="translate(0.00 0.25) scale(0.994)"><text x="8.5" y="15" text-anchor="middle" font-family="'Liberation Sans', sans-serif" font-size="17.5" fill="#fff" fill-opacity=".88" stroke="#fff" stroke-opacity=".5" stroke-width=".3">&amp;</text></g></svg>
<div style="position:absolute;left:798.9px;top:447.2px;width:36.1px;height:25.6px;background:#262626;"></div><div style="position:absolute;left:835.0px;top:467.2px;width:17px;height:5.6px;background:#5c5a58;"></div><div style="position:absolute;left:835.0px;top:469.59999999999997px;width:7.2px;height:3.2px;background:#e06a58;"></div><svg style="position:absolute;left:835.0px;top:447.2px;background:#cdb556" width="17" height="22.6" viewBox="0 0 17 22.6"><g transform="translate(0 4.2)"><g stroke="#fff" stroke-opacity=".78" fill="none" stroke-width="1.2" stroke-linecap="round" stroke-linejoin="round" stroke-width="1.5" stroke-opacity=".85"><path d="M2.8 9 H14.4 M9.6 3.9 L14.7 9 L9.6 14.1"/></g></g></svg><div style="position:absolute;left:800.90px;top:455.44px;font-size:8.7px;line-height:8.7px;color:#e8e8e8;white-space:nowrap;transform:scaleX(0.95);transform-origin:0 0;-webkit-text-stroke:0.22px #e8e8e8;">wind.x</div>
<div style="position:absolute;left:798.9px;top:487.5px;width:36.1px;height:25.6px;background:#262626;"></div><div style="position:absolute;left:835.0px;top:507.5px;width:17px;height:5.6px;background:#5c5a58;"></div><div style="position:absolute;left:835.0px;top:509.9px;width:4px;height:3.2px;background:#e06a58;"></div><svg style="position:absolute;left:835.0px;top:487.5px;background:#cdb556" width="17" height="22.6" viewBox="0 0 17 22.6"><g transform="translate(0 4.2)"><g stroke="#fff" stroke-opacity=".78" fill="none" stroke-width="1.2" stroke-linecap="round" stroke-linejoin="round" stroke-width="1.5" stroke-opacity=".85"><path d="M2.8 9 H14.4 M9.6 3.9 L14.7 9 L9.6 14.1"/></g></g></svg><div style="position:absolute;left:800.90px;top:495.74px;font-size:8.7px;line-height:8.7px;color:#e8e8e8;white-space:nowrap;transform:scaleX(0.95);transform-origin:0 0;-webkit-text-stroke:0.22px #e8e8e8;">wind.a</div><div style="position:absolute;left:797.1px;top:485.7px;width:56.7px;height:29.200000000000003px;background:transparent;border:1.3px solid #f4f4f4;border-radius:2px"></div>
<div style="position:absolute;left:798.9px;top:527.4px;width:36.1px;height:25.6px;background:#262626;"></div><div style="position:absolute;left:835.0px;top:547.4px;width:17px;height:5.6px;background:#5c5a58;"></div><div style="position:absolute;left:835.0px;top:549.8px;width:1.6px;height:3.2px;background:#e06a58;"></div><svg style="position:absolute;left:835.0px;top:527.4px;background:#cdb556" width="17" height="22.6" viewBox="0 0 17 22.6"><g transform="translate(0 4.2)"><g stroke="#fff" stroke-opacity=".78" fill="none" stroke-width="1.2" stroke-linecap="round" stroke-linejoin="round" stroke-width="1.5" stroke-opacity=".85"><path d="M2.8 9 H14.4 M9.6 3.9 L14.7 9 L9.6 14.1"/></g></g></svg><div style="position:absolute;left:800.90px;top:535.64px;font-size:8.7px;line-height:8.7px;color:#e8e8e8;white-space:nowrap;transform:scaleX(0.95);transform-origin:0 0;-webkit-text-stroke:0.22px #e8e8e8;">wind.f</div>
<div style="position:absolute;left:1226.5px;top:336.2px;width:51.4px;height:11.8px;background:#4b4b50;"></div><div style="position:absolute;left:1264.9px;top:336.2px;width:13px;height:11.8px;background:#3f3f43;"></div><div style="position:absolute;left:1226.50px;top:337.52px;width:38.4px;text-align:center;font-size:8.6px;line-height:8.6px;color:#e0e0e0;white-space:nowrap;transform:scaleX(0.9);transform-origin:50% 0;-webkit-text-stroke:0.22px #e0e0e0;">brain</div><svg style="position:absolute;left:1267.9px;top:339.59999999999997px" width="7" height="6" viewBox="0 0 7 6"><path d="M1.4 1.1 H5.6 L3.5 4.7 Z" fill="#c4c4c4"/></svg>
<div style="position:absolute;left:640px;top:35.2px;width:639.1px;height:298.6px;background:#f4f4f4"></div>
<svg style="position:absolute;left:641.5px;top:36.8px;background:#282828" width="636.4" height="294.9" viewBox="0 0 636.4 294.9">
<defs><linearGradient id="fade" x1="0" y1="0" x2="0" y2="1"><stop offset="0" stop-color="#282828" stop-opacity="1"/><stop offset="0.2" stop-color="#282828" stop-opacity=".9"/><stop offset="0.5" stop-color="#282828" stop-opacity=".5"/><stop offset="1" stop-color="#282828" stop-opacity="0"/></linearGradient></defs>
<path d="M-103.5 79.8L-1253.2 308.2M-62.4 78.0L-1101.0 308.2M-23.5 76.3L-948.9 308.2M13.3 74.8L-796.7 308.2M48.2 73.3L-644.5 308.2M81.4 71.8L-492.4 308.2M113.0 70.5L-340.2 308.2M143.1 69.2L-188.0 308.2M171.8 68.0L-35.9 308.2M199.1 66.8L116.3 308.2M225.3 65.7L268.4 308.2M250.3 64.6L420.6 308.2M274.3 63.6L572.8 308.2M297.3 62.6L724.9 308.2M319.3 61.6L877.1 308.2M340.4 60.7L1029.3 308.2M360.8 59.9L1181.4 308.2M380.3 59.0L1333.6 308.2M399.1 58.2L1485.8 308.2M417.2 57.4L1637.9 308.2M1131.4 204.1L-11.5 1073.5M934.8 163.8L-11.5 478.5M807.8 137.7L-11.5 312.0M718.9 119.4L-11.5 233.7M653.3 105.9L-11.5 188.2M602.8 95.6L-11.5 158.4M562.8 87.3L-11.5 137.4M530.3 80.7L-11.5 121.8M503.3 75.1L-11.5 109.8M480.7 70.5L-11.5 100.2M461.3 66.5L-11.5 92.4M444.6 63.1L-11.5 85.9M430.0 60.1L-11.5 80.5M417.2 57.4L-11.5 75.8" stroke="#5c5c5c" stroke-width="1" fill="none"/>
<rect x="0" y="40" width="636.4" height="105" fill="url(#fade)"/>
<polygon points="262.5,158.2 270.5,156.7 284.5,163.2 285.5,173.2 276.5,172.7" fill="#1b1b1b"/>
<polygon points="270.7,163.4 274.5,161.8 274.5,164.8" fill="#7078d8"/>
<ellipse cx="278.7" cy="162.8" rx="5.6" ry="6.6" fill="#5a62c4"/>
<ellipse cx="295.7" cy="175.8" rx="4.4" ry="3" fill="#5a5fd6"/>
<polygon points="283.9,149.8 304.1,149.2 304.7,174.8 284.5,175.8" fill="#5e62e4"/>
<polygon points="283.9,149.8 304.1,149.2 304.3,159.2 284.1,160.2" fill="#666cf0"/>
<polygon points="297.3,115.5 298.7,115.7 299.3,123.2 298.7,133.2 298.5,143.2 298.9,153.7 290.5,153.7 291.7,143.2 293.1,133.2 295.1,123.2" fill="#6a72ea"/>
<polygon points="298.1,122.2 333.1,138.6 332.7,143.2 331.1,148.2 313.5,144.4 297.5,139.6" fill="#d6baa0"/>
<polygon points="298.5,126.2 332.1,140.8 332.3,142.8 298.5,129.6" fill="#ead4be"/>
<polygon points="298.5,132.2 331.5,144.2 331.3,145.8 298.5,134.8" fill="#b2967c"/>
<polygon points="297.9,137.2 318.5,143.8 331.1,146.6 331.1,148.2 313.5,144.4 297.5,139.6" fill="#c8ac92"/>
<path transform="translate(389.0 212.7)" d="M0 0 V11.4 L2.7 8.9 L4.7 13.3 L6.5 12.5 L4.5 8.2 H8 Z" fill="#fff" stroke="#0c0c0c" stroke-width=".9"/>
</svg>
<div style="position:absolute;left:1240.6px;top:319.3px;font-size:9.4px;line-height:9.4px;color:#d23c30;white-space:nowrap;font-weight:bold">0:03:04</div>
<div style="position:absolute;left:1172.3px;top:37.2px;width:51.7px;height:11.8px;background:#4b4b50;"></div><div style="position:absolute;left:1211.0px;top:37.2px;width:13px;height:11.8px;background:#3f3f43;"></div><div style="position:absolute;left:1172.30px;top:38.52px;width:38.7px;text-align:center;font-size:8.6px;line-height:8.6px;color:#e0e0e0;white-space:nowrap;transform:scaleX(0.9);transform-origin:50% 0;-webkit-text-stroke:0.22px #e0e0e0;">camera1</div><svg style="position:absolute;left:1214.0px;top:40.6px" width="7" height="6" viewBox="0 0 7 6"><path d="M1.4 1.1 H5.6 L3.5 4.7 Z" fill="#c4c4c4"/></svg>
<div style="position:absolute;left:1226.3px;top:37.2px;width:51.6px;height:11.8px;background:#4b4b50;"></div><div style="position:absolute;left:1264.8999999999999px;top:37.2px;width:13px;height:11.8px;background:#3f3f43;"></div><div style="position:absolute;left:1226.30px;top:38.52px;width:38.6px;text-align:center;font-size:8.6px;line-height:8.6px;color:#e0e0e0;white-space:nowrap;transform:scaleX(0.9);transform-origin:50% 0;-webkit-text-stroke:0.22px #e0e0e0;">view</div><svg style="position:absolute;left:1267.8999999999999px;top:40.6px" width="7" height="6" viewBox="0 0 7 6"><path d="M1.4 1.1 H5.6 L3.5 4.7 Z" fill="#c4c4c4"/></svg>
<div style="position:absolute;left:0px;top:632px;width:1280px;height:88px;background:#56565c;"></div>
<div style="position:absolute;left:6.8px;top:659.8px;width:630.4px;height:12.5px;background:#a7a7a7;border-radius:1.5px;box-shadow:0 0 0 .9px #404044"></div><div style="position:absolute;left:9.1px;top:663.76px;font-family:'Liberation Mono', monospace;font-size:8.4px;line-height:8.4px;color:#0c0c0c;white-space:nowrap;transform:scaleX(.93);transform-origin:0 0;text-shadow:0 0 .4px rgba(0,0,0,.7)">wind.a</div>
<svg style="position:absolute;left:6.5px;top:679.2px;background:#cdb556;" width="17.2" height="19" viewBox="0 0 17.2 19"><g transform="translate(0.00 0.39) scale(1.012)"><g stroke="#fff" stroke-opacity=".78" fill="none" stroke-width="1.2" stroke-linecap="round" stroke-linejoin="round" stroke-width="1.5" stroke-opacity=".85"><path d="M2.8 9 H14.4 M9.6 3.9 L14.7 9 L9.6 14.1"/></g></g></svg>
<div style="position:absolute;left:36.8px;top:684.6px;width:552.4px;height:13.2px;background:#3e3e42;"></div>
<div style="position:absolute;left:37.6px;top:685.4px;width:551.2px;height:11.8px;background:#2a2a2a;"></div>
<div style="position:absolute;left:37.6px;top:685.4px;width:110px;height:11.8px;background:#7e7e7e;"></div>
<div style="position:absolute;left:590.7px;top:685px;width:45.6px;height:12.4px;background:#a7a7a7;border-radius:1.5px;box-shadow:0 0 0 .9px #404044"></div><div style="position:absolute;left:593.0px;top:688.96px;font-family:'Liberation Mono', monospace;font-size:8.4px;line-height:8.4px;color:#0c0c0c;white-space:nowrap;transform:scaleX(.93);transform-origin:0 0;text-shadow:0 0 .4px rgba(0,0,0,.7)">2.0000</div>
<div style="position:absolute;left:7.2px;top:701.3px;width:41.4px;height:13.4px;background:#675b56;border:1px solid #463e3c;border-radius:2px"></div>
<div style="position:absolute;left:7.20px;top:702.55px;width:41.4px;text-align:center;font-size:8.8px;line-height:8.8px;color:#e6ded6;white-space:nowrap;transform:scaleX(0.93);transform-origin:50% 0;-webkit-text-stroke:0.22px #e6ded6;text-shadow:0 0 .6px rgba(230,222,214,.7)">manual</div>
<div style="position:absolute;left:481.30px;top:703.54px;font-size:8.7px;line-height:8.7px;color:#cccccc;white-space:nowrap;transform:scaleX(0.93);transform-origin:0 0;-webkit-text-stroke:0.22px #cccccc;">range</div>
<div style="position:absolute;left:510.2px;top:701.8px;width:61.2px;height:12.4px;background:#a7a7a7;border-radius:1.5px;box-shadow:0 0 0 .9px #404044"></div><div style="position:absolute;left:512.5px;top:705.76px;font-family:'Liberation Mono', monospace;font-size:8.4px;line-height:8.4px;color:#0c0c0c;white-space:nowrap;transform:scaleX(.93);transform-origin:0 0;text-shadow:0 0 .4px rgba(0,0,0,.7)">0.0000</div>
<div style="position:absolute;left:573.8px;top:701.8px;width:62.4px;height:12.4px;background:#a7a7a7;border-radius:1.5px;box-shadow:0 0 0 .9px #404044"></div><div style="position:absolute;left:576.0999999999999px;top:705.76px;font-family:'Liberation Mono', monospace;font-size:8.4px;line-height:8.4px;color:#0c0c0c;white-space:nowrap;transform:scaleX(.93);transform-origin:0 0;text-shadow:0 0 .4px rgba(0,0,0,.7)">10.0000</div>
<div style="position:absolute;left:643.20px;top:645.54px;font-size:8.7px;line-height:8.7px;color:#d0d0d0;white-space:nowrap;transform:scaleX(0.93);transform-origin:0 0;-webkit-text-stroke:0.22px #d0d0d0;">channel</div>
<div style="position:absolute;left:679px;top:643.7px;width:51.6px;height:11.3px;background:#4b4b50;"></div><div style="position:absolute;left:717.4px;top:643.7px;width:13.2px;height:11.3px;background:#3e3e42;"></div><div style="position:absolute;left:679.00px;top:644.32px;width:38.400000000000006px;text-align:center;font-size:8.6px;line-height:8.6px;color:#e0e0e0;white-space:nowrap;transform:scaleX(0.9);transform-origin:50% 0;-webkit-text-stroke:0.22px #e0e0e0;">agent</div><svg style="position:absolute;left:720.5px;top:646.4000000000001px" width="7" height="6" viewBox="0 0 7 6"><path d="M1.2 5 H5.8 L3.5 1.1 Z" fill="#c8c8c8"/></svg>
<div style="position:absolute;left:732.3px;top:643.7px;width:133.4px;height:11.3px;background:#4b4b50;"></div><div style="position:absolute;left:853.0999999999999px;top:643.7px;width:12.6px;height:11.3px;background:#3e3e42;"></div><div style="position:absolute;left:732.30px;top:644.32px;width:120.80000000000001px;text-align:center;font-size:8.6px;line-height:8.6px;color:#e0e0e0;white-space:nowrap;transform:scaleX(0.9);transform-origin:50% 0;-webkit-text-stroke:0.22px #e0e0e0;">wind</div><svg style="position:absolute;left:855.9px;top:646.4000000000001px" width="7" height="6" viewBox="0 0 7 6"><path d="M1.2 5 H5.8 L3.5 1.1 Z" fill="#c8c8c8"/></svg>
<div style="position:absolute;left:867.9px;top:643.7px;width:133.4px;height:11.3px;background:#4b4b50;"></div><div style="position:absolute;left:988.5px;top:643.7px;width:12.8px;height:11.3px;background:#3e3e42;"></div><div style="position:absolute;left:867.90px;top:644.32px;width:120.60000000000001px;text-align:center;font-size:8.6px;line-height:8.6px;color:#e0e0e0;white-space:nowrap;transform:scaleX(0.9);transform-origin:50% 0;-webkit-text-stroke:0.22px #e0e0e0;">a</div><svg style="position:absolute;left:991.4px;top:646.4000000000001px" width="7" height="6" viewBox="0 0 7 6"><path d="M1.2 5 H5.8 L3.5 1.1 Z" fill="#c8c8c8"/></svg>
<div style="position:absolute;left:643.7px;top:660px;width:630px;height:12.3px;background:#a7a7a7;border-radius:1.5px;box-shadow:0 0 0 .9px #404044"></div><div style="position:absolute;left:646.0px;top:663.96px;font-family:'Liberation Mono', monospace;font-size:8.4px;line-height:8.4px;color:#0c0c0c;white-space:nowrap;transform:scaleX(.93);transform-origin:0 0;text-shadow:0 0 .4px rgba(0,0,0,.7)">wind.a</div>
<div style="position:absolute;left:644.7px;top:685.5px;width:311px;height:11.6px;background:#1c1c1c;"></div>
<div style="position:absolute;left:644.70px;top:686.84px;width:311px;text-align:center;font-size:8.7px;line-height:8.7px;color:#e08a50;white-space:nowrap;transform:scaleX(0.95);transform-origin:50% 0;-webkit-text-stroke:0.22px #e08a50;">pos</div>
<div style="position:absolute;left:959.4px;top:685.5px;width:311.4px;height:11.6px;background:#4c4c51;"></div>
<div style="position:absolute;left:959.40px;top:686.84px;width:311.4px;text-align:center;font-size:8.7px;line-height:8.7px;color:#dcdcdc;white-space:nowrap;transform:scaleX(0.95);transform-origin:50% 0;-webkit-text-stroke:0.22px #dcdcdc;">speed</div>
<div style="position:absolute;left:644.70px;top:703.04px;font-size:8.7px;line-height:8.7px;color:#cccccc;white-space:nowrap;transform:scaleX(0.93);transform-origin:0 0;-webkit-text-stroke:0.22px #cccccc;">defuzz</div>
<div style="position:absolute;left:679px;top:702.3px;width:52px;height:11.3px;background:#4b4b50;"></div><div style="position:absolute;left:718px;top:702.3px;width:13px;height:11.3px;background:#3e3e42;"></div><div style="position:absolute;left:679.00px;top:702.92px;width:39px;text-align:center;font-size:8.6px;line-height:8.6px;color:#e0e0e0;white-space:nowrap;transform:scaleX(0.9);transform-origin:50% 0;-webkit-text-stroke:0.22px #e0e0e0;">average</div><svg style="position:absolute;left:721.0px;top:705.0px" width="7" height="6" viewBox="0 0 7 6"><path d="M1.2 5 H5.8 L3.5 1.1 Z" fill="#c8c8c8"/></svg>
<div style="position:absolute;left:1061.00px;top:702.94px;font-size:8.7px;line-height:8.7px;color:#cccccc;white-space:nowrap;transform:scaleX(0.93);transform-origin:0 0;-webkit-text-stroke:0.22px #cccccc;">alt</div>
<div style="position:absolute;left:1077.1px;top:702.6px;width:43.6px;height:11.3px;background:#4b4b50;"></div><div style="position:absolute;left:1107.8999999999999px;top:702.6px;width:12.8px;height:11.3px;background:#3e3e42;"></div><div style="position:absolute;left:1077.10px;top:703.22px;width:30.8px;text-align:center;font-size:8.6px;line-height:8.6px;color:#e0e0e0;white-space:nowrap;transform:scaleX(0.9);transform-origin:50% 0;-webkit-text-stroke:0.22px #e0e0e0;">latch</div><svg style="position:absolute;left:1110.7999999999997px;top:705.3000000000001px" width="7" height="6" viewBox="0 0 7 6"><path d="M1.2 5 H5.8 L3.5 1.1 Z" fill="#c8c8c8"/></svg>
<div style="position:absolute;left:1126.30px;top:702.94px;font-size:8.7px;line-height:8.7px;color:#cccccc;white-space:nowrap;transform:scaleX(0.93);transform-origin:0 0;-webkit-text-stroke:0.22px #cccccc;">delay</div>
<div style="position:absolute;left:1152.2px;top:702px;width:46px;height:12.4px;background:#a7a7a7;border-radius:1.5px;box-shadow:0 0 0 .9px #404044"></div><div style="position:absolute;left:1154.5px;top:705.96px;font-family:'Liberation Mono', monospace;font-size:8.4px;line-height:8.4px;color:#0c0c0c;white-space:nowrap;transform:scaleX(.93);transform-origin:0 0;text-shadow:0 0 .4px rgba(0,0,0,.7)">0.0000</div>
<div style="position:absolute;left:1206.00px;top:702.94px;font-size:8.7px;line-height:8.7px;color:#cccccc;white-space:nowrap;transform:scaleX(0.93);transform-origin:0 0;-webkit-text-stroke:0.22px #cccccc;">filter</div>
<div style="position:absolute;left:1226.7px;top:702px;width:46.9px;height:12.4px;background:#a7a7a7;border-radius:1.5px;box-shadow:0 0 0 .9px #404044"></div><div style="position:absolute;left:1229.0px;top:705.96px;font-family:'Liberation Mono', monospace;font-size:8.4px;line-height:8.4px;color:#0c0c0c;white-space:nowrap;transform:scaleX(.93);transform-origin:0 0;text-shadow:0 0 .4px rgba(0,0,0,.7)">0.0000</div>
<svg style="position:absolute;left:1265.8px;top:633.8px" width="11.8" height="11.8" viewBox="0 0 12 12"><rect x="0" y="0" width="12" height="12" rx="1.2" fill="#4a4242"/><rect x="1" y="1" width="10" height="10" fill="#8a7468"/><rect x="3" y="5" width="6" height="5" fill="#e2d6cc"/><path d="M4.2 5 V3.8 A1.8 1.8 0 0 1 7.8 3.8 V5" stroke="#e2d6cc" stroke-width="1.1" fill="none"/></svg>
<div style="position:absolute;left:1050px;top:648px;width:230px;height:64px;opacity:.085;color:#fff;line-height:1;white-space:nowrap"><div style="position:absolute;left:81px;top:4.2px;font-size:32.6px;line-height:32.6px;transform:scaleX(.9);transform-origin:0 0;-webkit-text-stroke:.6px #fff">GNOMON</div><div style="position:absolute;left:81px;top:30.8px;font-size:27.6px;line-height:27.6px;transform:scaleX(.815);transform-origin:0 0;-webkit-text-stroke:.6px #fff">WORKSHOP</div><div style="position:absolute;left:69.5px;top:30px;font-size:7.6px;line-height:7.6px;font-weight:bold;transform:rotate(-90deg);transform-origin:0 0;letter-spacing:1.6px">THE</div><svg style="position:absolute;left:6px;top:6px" width="66" height="48" viewBox="0 0 66 48"><g fill="none" stroke="#fff" stroke-linecap="round"><path d="M44 2 C36 8 30 16 29 23 C28 29 34 30 40 30 C50 30 58 31 60 35" stroke-width="3.4"/><path d="M12 22 C6 26 4 34 10 40 C18 47 40 47 52 42 C58 39 61 37 60 35" stroke-width="4.2"/><path d="M12 22 C16 19 20 20 22 23 M7 28 L3 27 M6 36 L2 38 M12 42 L10 46" stroke-width="3"/></g></svg></div>
</div></body></html>
